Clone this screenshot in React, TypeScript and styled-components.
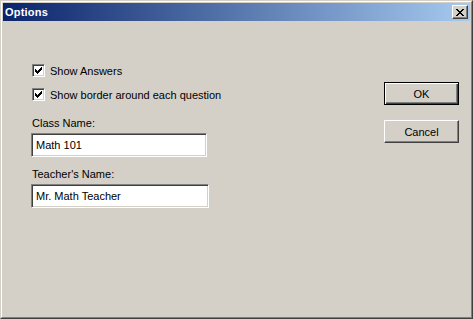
import React from "react";
import styled, { createGlobalStyle } from "styled-components";

const Global = createGlobalStyle`
  html, body { margin: 0; padding: 0; background: #d4d0c8; }
  body { font-family: "Liberation Sans", Arial, sans-serif; font-size: 11px; color: #000; }
`;

const Window = styled.div`
  box-sizing: border-box;
  width: 473px;
  height: 319px;
  background: #d4d0c8;
  border-style: solid;
  border-width: 1px;
  border-color: #d4d0c8 #404040 #404040 #d4d0c8;
  display: flex;
  flex-direction: column;
`;

const Frame = styled.div`
  flex: 1;
  display: flex;
  flex-direction: column;
  border-style: solid;
  border-width: 1px;
  border-color: #ffffff #808080 #808080 #ffffff;
  padding: 1px;
`;

const TitleBar = styled.div`
  height: 18px;
  display: flex;
  align-items: center;
  justify-content: space-between;
  padding: 0 2px 0 2px;
  background: linear-gradient(to right, #0a246a, #a6caf0);
`;

const Title = styled.span`
  color: #fff;
  font-weight: bold;
  font-size: 11px;
  letter-spacing: 0.2px;
`;

const CloseButton = styled.div`
  box-sizing: border-box;
  width: 16px;
  height: 14px;
  background: #d4d0c8;
  border-style: solid;
  border-width: 1px;
  border-color: #ffffff #404040 #404040 #ffffff;
  box-shadow: inset -1px -1px 0 #808080;
  display: flex;
  align-items: center;
  justify-content: center;
`;

const Body = styled.div`
  flex: 1;
  display: flex;
`;

const LeftCol = styled.div`
  flex: 1;
  display: flex;
  flex-direction: column;
  padding: 43px 0 0 29px;
`;

const CheckRow = styled.label<{ $gap?: number }>`
  display: flex;
  align-items: center;
  height: 13px;
  margin-bottom: ${(p) => p.$gap ?? 0}px;
  gap: 5px;
`;

const CheckBox = styled.span`
  box-sizing: border-box;
  width: 13px;
  height: 13px;
  background: #fff;
  border-style: solid;
  border-width: 1px;
  border-color: #808080 #ffffff #ffffff #808080;
  box-shadow: inset 1px 1px 0 #404040, inset -1px -1px 0 #d4d0c8;
  display: flex;
  align-items: center;
  justify-content: center;
`;

const FieldLabel = styled.div<{ $top: number }>`
  margin-top: ${(p) => p.$top}px;
  height: 13px;
  line-height: 13px;
`;

const TextBox = styled.div<{ $w: number }>`
  box-sizing: border-box;
  width: ${(p) => p.$w}px;
  height: 24px;
  margin-top: 3px;
  margin-left: -1px;
  background: #fff;
  border-style: solid;
  border-width: 1px;
  border-color: #808080 #ffffff #ffffff #808080;
  box-shadow: inset 1px 1px 0 #404040, inset -1px -1px 0 #d4d0c8;
  display: flex;
  align-items: center;
  padding-left: 4px;
`;

const RightCol = styled.div`
  width: 75px;
  padding: 61px 11px 0 0;
  display: flex;
  flex-direction: column;
  gap: 15px;
`;

const Button = styled.div<{ $default?: boolean }>`
  box-sizing: border-box;
  width: 75px;
  height: 23px;
  display: flex;
  align-items: center;
  justify-content: center;
  background: #d4d0c8;
  border-style: solid;
  border-width: 1px;
  border-color: ${(p) => (p.$default ? "#000" : "#fff #404040 #404040 #fff")};
  box-shadow: ${(p) =>
    p.$default
      ? "inset 1px 1px 0 #fff, inset -1px -1px 0 #404040, inset -2px -2px 0 #808080"
      : "inset -1px -1px 0 #808080"};
`;

const Check = () => (
  <svg width="7" height="7" viewBox="0 0 7 7" shapeRendering="crispEdges">
    <path
      d="M0 2h1v3H0zM1 3h1v3H1zM2 4h1v3H2zM3 3h1v3H3zM4 2h1v3H4zM5 1h1v3H5zM6 0h1v3H6z"
      fill="#000"
    />
  </svg>
);

export default function App() {
  return (
    <>
      <Global />
      <Window>
        <Frame>
          <TitleBar>
            <Title>Options</Title>
            <CloseButton>
              <svg width="8" height="7" viewBox="0 0 8 7" shapeRendering="crispEdges">
                <path
                  d="M0 0h2v1H0zM6 0h2v1H6zM1 1h2v1H1zM5 1h2v1H5zM2 2h4v1H2zM3 3h2v1H3zM2 4h4v1H2zM1 5h2v1H1zM5 5h2v1H5zM0 6h2v1H0zM6 6h2v1H6z"
                  fill="#000"
                />
              </svg>
            </CloseButton>
          </TitleBar>
          <Body>
            <LeftCol>
              <CheckRow $gap={11}>
                <CheckBox>
                  <Check />
                </CheckBox>
                Show Answers
              </CheckRow>
              <CheckRow>
                <CheckBox>
                  <Check />
                </CheckBox>
                Show border around each question
              </CheckRow>
              <FieldLabel $top={16}>Class Name:</FieldLabel>
              <TextBox $w={176}>Math 101</TextBox>
              <FieldLabel $top={11}>Teacher's Name:</FieldLabel>
              <TextBox $w={178}>Mr. Math Teacher</TextBox>
            </LeftCol>
            <RightCol>
              <Button $default>OK</Button>
              <Button>Cancel</Button>
            </RightCol>
          </Body>
        </Frame>
      </Window>
    </>
  );
}
